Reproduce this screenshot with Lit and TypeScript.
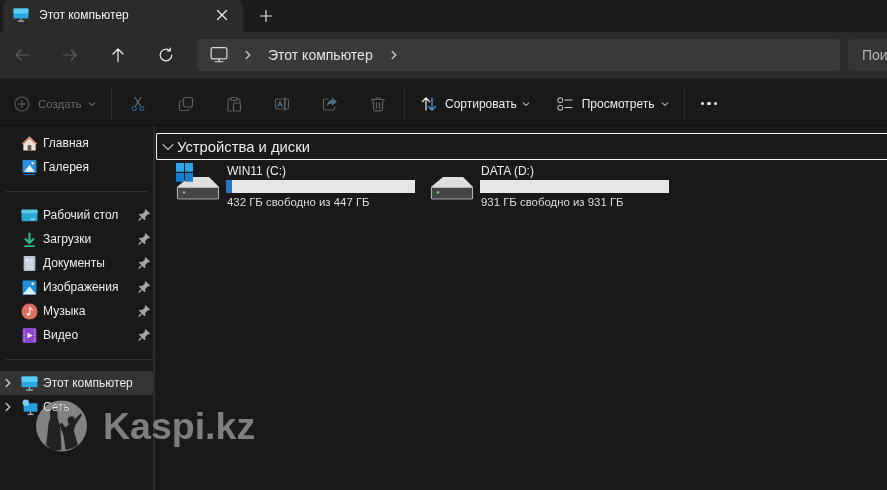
import { LitElement, html, css, svg } from "lit";
import { customElement } from "lit/decorators.js";

const line = (d: string, color = "currentColor", w = 1.2) =>
  svg`<path d=${d} fill="none" stroke=${color} stroke-width=${w} stroke-linecap="round" stroke-linejoin="round"/>`;

const icon = (size: number, body: unknown) =>
  html`<svg width=${size} height=${size} viewBox="0 0 16 16">${body}</svg>`;

// иконки навигации
const navIcons: Record<string, unknown> = {
  home: svg`<path d="M8 1.500 15 8l-1.200 1V14.500H2.200V9L1 8z" fill="#e8e2dc"/><path d="M8 1.500 15 8l-1.200 1L8 3.600 2.200 9 1 8z" fill="#d9825b"/><rect x="6.300" y="9.500" width="3.400" height="5" fill="#5a5a5a"/>`,
  gallery: svg`<rect x="1.500" y="1" width="13" height="12" rx="1" fill="#2f8fdc"/><path d="M3 12 8 5.500 13 12z" fill="#e6f3fb"/><circle cx="11" cy="4" r="1.100" fill="#fff"/><path d="M2.500 14.700h11" stroke="#1b6cb0" stroke-width="1.200"/>`,
  desktop: svg`<rect x=".5" y="2.500" width="15" height="11" rx="1" fill="#2aa5cf"/><rect x=".5" y="2.500" width="15" height="3.500" fill="#5cc8e6"/><rect x="9" y="11" width="4" height="1" fill="#c8eef8"/>`,
  downloads: svg`<path d="M8 1.500v9" stroke="#37b58e" stroke-width="2"/><path d="M3.800 7 8 11.200 12.200 7" fill="none" stroke="#37b58e" stroke-width="2"/><path d="M3 14.300h10" stroke="#37b58e" stroke-width="1.600"/>`,
  docs: svg`<rect x="2.500" y="1" width="11" height="14" rx="1" fill="#b9c4d2"/><path d="M8 4h3.500M8 6h3.500M4.500 8.500h7M4.500 10.500h7M4.500 12.500h7" stroke="#eef2f6" stroke-width="1"/><rect x="4.500" y="3.500" width="2.500" height="3" fill="#eef2f6"/>`,
  images: svg`<rect x="1.500" y="1.500" width="13" height="13" rx="1" fill="#1f8edb"/><path d="M1.500 14.500 8 7l6.500 7.500z" fill="#dff1fb"/><circle cx="11" cy="4.500" r="1.200" fill="#fff"/>`,
  music: svg`<circle cx="8" cy="8" r="7.500" fill="#d9705f"/><path d="M8.300 4v6.500" stroke="#fbe9e4" stroke-width="1.200"/><path d="M8.300 4c.4 1.600 2.400 1.600 2.600 3" fill="none" stroke="#fbe9e4" stroke-width="1"/><circle cx="6.900" cy="10.700" r="1.500" fill="#fbe9e4"/>`,
  video: svg`<rect x="1.500" y="1" width="13" height="14" rx="1.500" fill="#8a45c9"/><path d="M6 5.200 11 8l-5 2.800z" fill="#f0dcff"/><path d="M3 2.500v11M13 2.500v11" stroke="#caa0ee" stroke-width="1.200" stroke-dasharray="1.200 1.200"/>`,
  pc: svg`<rect x=".5" y="1.500" width="15" height="10" rx="1" fill="#28a8dc"/><rect x=".5" y="1.500" width="15" height="5" rx="1" fill="#5ccdf0"/><path d="M8 11.500v2.300M4.800 14.200h6.400" stroke="#9fb8c4" stroke-width="1.200"/>`,
  net: svg`<rect x="2.500" y="4" width="13" height="8" rx="1" fill="#28a0d8"/><circle cx="4.500" cy="3.500" r="3" fill="#7fd0ee"/><path d="M9 12v2M6.300 14.500h5.400" stroke="#9fb8c4" stroke-width="1.200"/>`,
};

const pin = svg`<path d="M9.500 2 14 6.500 13 7.500 12 7.200 9.200 10 9.400 12.500 8.400 13.300 2.900 7.800 3.700 6.800 6.200 7 9 4.200 8.700 3.200z" fill="#a3a3a3"/><path d="M5.500 10.700 2.600 13.600" stroke="#a3a3a3" stroke-width="1.400"/>`;

// команды тулбара, все неактивные
const commandIcons = [
  svg`${line("M5 1.500 10.800 10.500M11 1.500 5.200 10.500", "#63717d")}<circle cx="4.200" cy="12.500" r="2" fill="none" stroke="#2f5d86" stroke-width="1.200"/><circle cx="11.800" cy="12.500" r="2" fill="none" stroke="#2f5d86" stroke-width="1.200"/>`,
  svg`<rect x="5.500" y="1.500" width="9" height="9.500" rx="2" fill="none" stroke="#5f5f5f" stroke-width="1.200"/>${line("M3.500 5H3a1.500 1.500 0 0 0-1.500 1.500v6.500A1.500 1.500 0 0 0 3 14.500h6.500a1.500 1.500 0 0 0 1.500-1.500", "#5f5f5f")}`,
  svg`${line("M5 3H3a1 1 0 0 0-1 1v10a1 1 0 0 0 1 1h3M11 3h2a1 1 0 0 1 1 1v2", "#5f5f5f")}<rect x="5" y="1.500" width="6" height="3" rx="1" fill="none" stroke="#5f5f5f" stroke-width="1.200"/><rect x="7.500" y="7" width="7" height="8" rx="1" fill="none" stroke="#5f5f5f" stroke-width="1.200"/>`,
  svg`<rect x="1.500" y="3" width="9" height="10" rx="1.500" fill="none" stroke="#5f5f5f" stroke-width="1.200"/>${line("M12 3h1a1.500 1.500 0 0 1 1.500 1.500v7A1.500 1.500 0 0 1 13 13h-1M11 1.500v13", "#5f5f5f")}${line("M3.800 10.500 6 5.200l2.200 5.300M4.600 8.800h2.800", "#47708f")}`,
  svg`${line("M6 3H3a1.500 1.500 0 0 0-1.500 1.500v8A1.500 1.500 0 0 0 3 14h8a1.500 1.500 0 0 0 1.500-1.500V11", "#5f5f5f")}<path d="M10 1.500 15 5.700 10 9.800V7.500C7.500 7.500 6 8.500 4.700 10.500 5 7 6.800 4.300 10 4z" fill="#4f6f88"/>`,
  svg`${line("M1.500 3.500h13M6 3.500V2h4v1.500M3 3.500l.8 10a1.500 1.500 0 0 0 1.500 1.300h5.400a1.500 1.500 0 0 0 1.500-1.300l.8-10M6.500 6.500v5.500M9.500 6.500v5.500", "#5f5f5f")}`,
];

const chevronDown = (color: string) =>
  html`<svg width="8" height="8" viewBox="0 0 8 8">${line("M1.200 2.800 4 5.400 6.800 2.800", color, 1.100)}</svg>`;
const chevronRight = html`<svg width="10" height="10" viewBox="0 0 10 10">${line("M3.200 1.500 6.800 5 3.200 8.500", "#c8c8c8", 1.400)}</svg>`;

@customElement("app-root")
export class AppRoot extends LitElement {
  static styles = css`
    :host {
      display: block;
      width: 887px;
      height: 490px;
      overflow: hidden;
      position: relative;
      background: #191919;
      color: #f0f0f0;
      font-family: "Liberation Sans", sans-serif;
      font-size: 12px;
    }
    svg { display: block; flex: none; }

    .tabs { display: flex; align-items: flex-end; height: 32px; background: #1c1c1c; }
    .tab {
      display: flex; align-items: center; width: 240px; height: 32px; margin-left: 3px;
      padding: 0 15px 2px 10px; box-sizing: border-box; background: #2b2b2b;
      border-radius: 7px 7px 0 0; font-size: 12px;
    }
    .tab .title { margin-left: 10px; flex: 1; }
    .plus { margin: 0 0 10px 17px; }

    .nav {
      display: flex; align-items: center; height: 47px; box-sizing: border-box;
      padding: 0 0 1px 14px; background: #2b2b2b; border-bottom: 1px solid #222;
    }
    .nav-btn { width: 16px; display: flex; margin-right: 32px; color: #f0f0f0; }
    .nav-btn.off { color: #5f5f5f; }
    .nav-btn:nth-child(4) { margin-right: 23px; }
    .address {
      display: flex; align-items: center; width: 643px; height: 32px; box-sizing: border-box;
      padding: 0 0 0 13px; background: #393939; border-radius: 4px; font-size: 14px; color: #e4e4e4;
    }
    .address .pc-name { margin: 0 16px 0 15px; }
    .address .chev { margin-left: 15px; }
    .search {
      margin-left: 8px; flex: 1; height: 32px; padding-left: 14px; display: flex; align-items: center;
      background: #353535; border-radius: 4px 0 0 4px; color: #b4b4b4; font-size: 14px; overflow: hidden;
    }

    .commands {
      display: flex; align-items: center; height: 47px; box-sizing: border-box; padding: 3px 0 0 14px;
      background: #191919; border-bottom: 1px solid #0e0e0e;
    }
    .create { display: flex; align-items: center; width: 97px; color: #6a6a6a; font-size: 11.500px; }
    .create span { margin: 0 6px 0 8px; }
    .sep { width: 1px; height: 32px; background: #2b2b2b; }
    .cmd-group { display: flex; gap: 32px; padding: 0 18px; }
    .sort, .view { display: flex; align-items: center; color: #ececec; }
    .sort { margin-left: 16px; }
    .sort span { margin: 0 5px 0 8px; }
    .view { margin-left: 27px; margin-right: 15px; }
    .view span { margin: 0 6px 0 9px; }
    .dots { display: flex; gap: 3px; margin-left: 16px; }
    .dots i { width: 3.500px; height: 3.500px; border-radius: 50%; background: #ededed; }

    .body { display: flex; height: 364px; }
    .side { width: 153px; flex: none; padding-top: 5px; box-sizing: border-box; }
    .split { width: 2px; flex: none; background: #2a2a2a; }
    .row {
      display: flex; align-items: center; height: 24px; padding: 0 0 0 21px; font-size: 12px;
      color: #ececec; white-space: nowrap;
    }
    .row .label { margin-left: 5px; flex: 1; }
    .row .pin { margin-right: 1px; }
    .row.tree { padding-left: 3px; }
    .row.tree svg:first-child { margin-right: 8px; }
    .row.active { background: #343434; border-radius: 0 3px 3px 0; }
    .divider { height: 1px; background: #333; margin: 12px 6px 11px 6px; }
    .divider.low { margin-right: 0; }

    .main { flex: 1; padding-top: 7px; min-width: 0; }
    .group {
      display: flex; align-items: center; height: 27px; box-sizing: border-box; margin-left: 1px;
      padding-left: 5px; border: 1px solid #f2f2f2; border-right: none; border-radius: 2px 0 0 2px;
      font-size: 14.800px; color: #ececec;
    }
    .group svg { margin-right: 3px; }
    .drives { display: flex; padding: 3px 0 0 20px; }
    .drive { display: flex; width: 254px; }
    .drive .info { margin-left: 7px; width: 189px; }
    .drive .name { font-size: 12px; line-height: 16px; color: #ececec; padding-left: 1px; }
    .bar { height: 13px; background: #e6e6e6; margin: 1px 0 2px; }
    .bar div { height: 100%; background: #2a76c6; }
    .drive .free { font-size: 11.400px; line-height: 14px; color: #dcdcdc; white-space: nowrap; padding-left: 1px; }

    .mark {
      position: absolute; left: 36px; top: 400px; display: flex; align-items: center; gap: 16px;
      color: #7e7e7e; font-size: 37.500px; font-weight: 700; line-height: 52px; mix-blend-mode: lighten;
    }
  `;

  private navRow(key: string, label: string, pinned = false) {
    return html`<div class="row">
      ${icon(17, navIcons[key])}
      <span class="label">${label}</span>
      ${pinned ? html`<span class="pin">${icon(16, pin)}</span>` : ""}
    </div>`;
  }

  private driveIcon(withLogo: boolean) {
    return html`<svg width="44" height="38" viewBox="0 0 44 38">
      <path d="M14 14H34L44 24V36H2V24z" fill="#dedede"/>
      <rect x="2.400" y="24.400" width="41.200" height="11.600" rx="1" fill="#454545" stroke="#c4c4c4" stroke-width=".8"/>
      <circle cx="9" cy="29.500" r="1.300" fill="#6fd06f"/>
      ${withLogo
        ? svg`<path d="M1 0h8v8.800H1zM10 0h8v8.800h-8z" fill="#2ba6ea"/><path d="M1 10h8v8.800H1zM10 10h8v8.800h-8z" fill="#1580d0"/>`
        : ""}
    </svg>`;
  }

  private drive(name: string, free: string, used: number, withLogo: boolean) {
    return html`<div class="drive">
      ${this.driveIcon(withLogo)}
      <div class="info">
        <div class="name">${name}</div>
        <div class="bar"><div style="width:${used}%"></div></div>
        <div class="free">${free}</div>
      </div>
    </div>`;
  }

  render() {
    return html`
      <div class="tabs">
        <div class="tab">
          ${icon(16, navIcons.pc)}
          <span class="title">Этот компьютер</span>
          <svg width="12" height="12" viewBox="0 0 12 12">${line("M1.500 1.500l9 9M10.500 1.500l-9 9", "#ececec", 1.300)}</svg>
        </div>
        <svg class="plus" width="12" height="12" viewBox="0 0 12 12">${line("M6 .5v11M.5 6h11", "#ececec", 1.100)}</svg>
      </div>

      <div class="nav">
        <div class="nav-btn off">${icon(16, line("M14.500 8H2M7 3 2 8l5 5"))}</div>
        <div class="nav-btn off">${icon(16, line("M1.500 8H14M9 3l5 5-5 5"))}</div>
        <div class="nav-btn">${icon(16, line("M8 14.500V2M3 7l5-5 5 5"))}</div>
        <div class="nav-btn">${icon(16, line("M13.800 8a5.800 5.800 0 1 1-2-4.400M12.300 1v3h-3"))}</div>
        <div class="address">
          ${icon(18, svg`<rect x="1" y="1.500" width="14" height="10" rx="1.500" fill="none" stroke="#d8d8d8" stroke-width="1.100"/>${line("M4.500 14h7M8 11.500V14", "#d8d8d8", 1.100)}`)}
          <span class="chev">${chevronRight}</span>
          <span class="pc-name">Этот компьютер</span>
          ${chevronRight}
        </div>
        <div class="search">Пои</div>
      </div>

      <div class="commands">
        <div class="create">
          ${icon(16, svg`<circle cx="8" cy="8" r="7" fill="none" stroke="#5c5c5c" stroke-width="1.100"/>${line("M8 4.500v7M4.500 8h7", "#5c5c5c", 1.100)}`)}
          <span>Создать</span>
          ${chevronDown("#6a6a6a")}
        </div>
        <div class="sep"></div>
        <div class="cmd-group">${commandIcons.map((i) => icon(16, i))}</div>
        <div class="sep"></div>
        <div class="sort">
          ${icon(16, svg`${line("M5 14V2M1.500 5.500 5 2l3.500 3.500", "#f0f0f0")}${line("M11 2v12M7.500 10.500 11 14l3.500-3.500", "#4aa3e8")}`)}
          <span>Сортировать</span>
          ${chevronDown("#b0b0b0")}
        </div>
        <div class="view">
          ${icon(16, svg`<rect x="1" y="2" width="4.500" height="4.500" rx="1" fill="none" stroke="#d0d0d0"/><rect x="1" y="9.500" width="4.500" height="4.500" rx="1" fill="none" stroke="#d0d0d0"/>${line("M8 4h7M8 11.500h7", "#d0d0d0", 1)}`)}
          <span>Просмотреть</span>
          ${chevronDown("#b0b0b0")}
        </div>
        <div class="sep"></div>
        <div class="dots"><i></i><i></i><i></i></div>
      </div>

      <div class="body">
        <div class="side">
          ${this.navRow("home", "Главная")}
          ${this.navRow("gallery", "Галерея")}
          <div class="divider"></div>
          ${this.navRow("desktop", "Рабочий стол", true)}
          ${this.navRow("downloads", "Загрузки", true)}
          ${this.navRow("docs", "Документы", true)}
          ${this.navRow("images", "Изображения", true)}
          ${this.navRow("music", "Музыка", true)}
          ${this.navRow("video", "Видео", true)}
          <div class="divider low"></div>
          <div class="row tree active">${chevronRight}${icon(17, navIcons.pc)}<span class="label">Этот компьютер</span></div>
          <div class="row tree">${chevronRight}${icon(17, navIcons.net)}<span class="label">Сеть</span></div>
        </div>
        <div class="split"></div>
        <div class="main">
          <div class="group">
            <svg width="12" height="12" viewBox="0 0 12 12">${line("M1 3.500 6 8.500 11 3.500", "#b8b8b8", 1.100)}</svg>
            Устройства и диски
          </div>
          <div class="drives">
            ${this.drive("WIN11 (C:)", "432 ГБ свободно из 447 ГБ", 3.200, true)}
            ${this.drive("DATA (D:)", "931 ГБ свободно из 931 ГБ", 0, false)}
          </div>
        </div>
      </div>

      <div class="mark">
        <svg width="51" height="52" viewBox="0 0 50 51">
          <circle cx="25" cy="25.500" r="25" fill="#828282"/>
          <path d="M10 44 12 26C12 21 14 20 14 16 13 11 15 8 17 8c3 0 5 4 4 9 1 4 3 8 3 12l1 20-9 1z" fill="#222"/>
          <path d="M29 49 27 35 23 24 25 22 29 27 32 24 31 20c0-3 2-4 4-4 2 0 3 1 3 3L44 13l1 2-6 9-2 6 4 14c-3 3-7 4-12 5z" fill="#222"/>
        </svg>
        <span>Kaspi.kz</span>
      </div>
    `;
  }
}
